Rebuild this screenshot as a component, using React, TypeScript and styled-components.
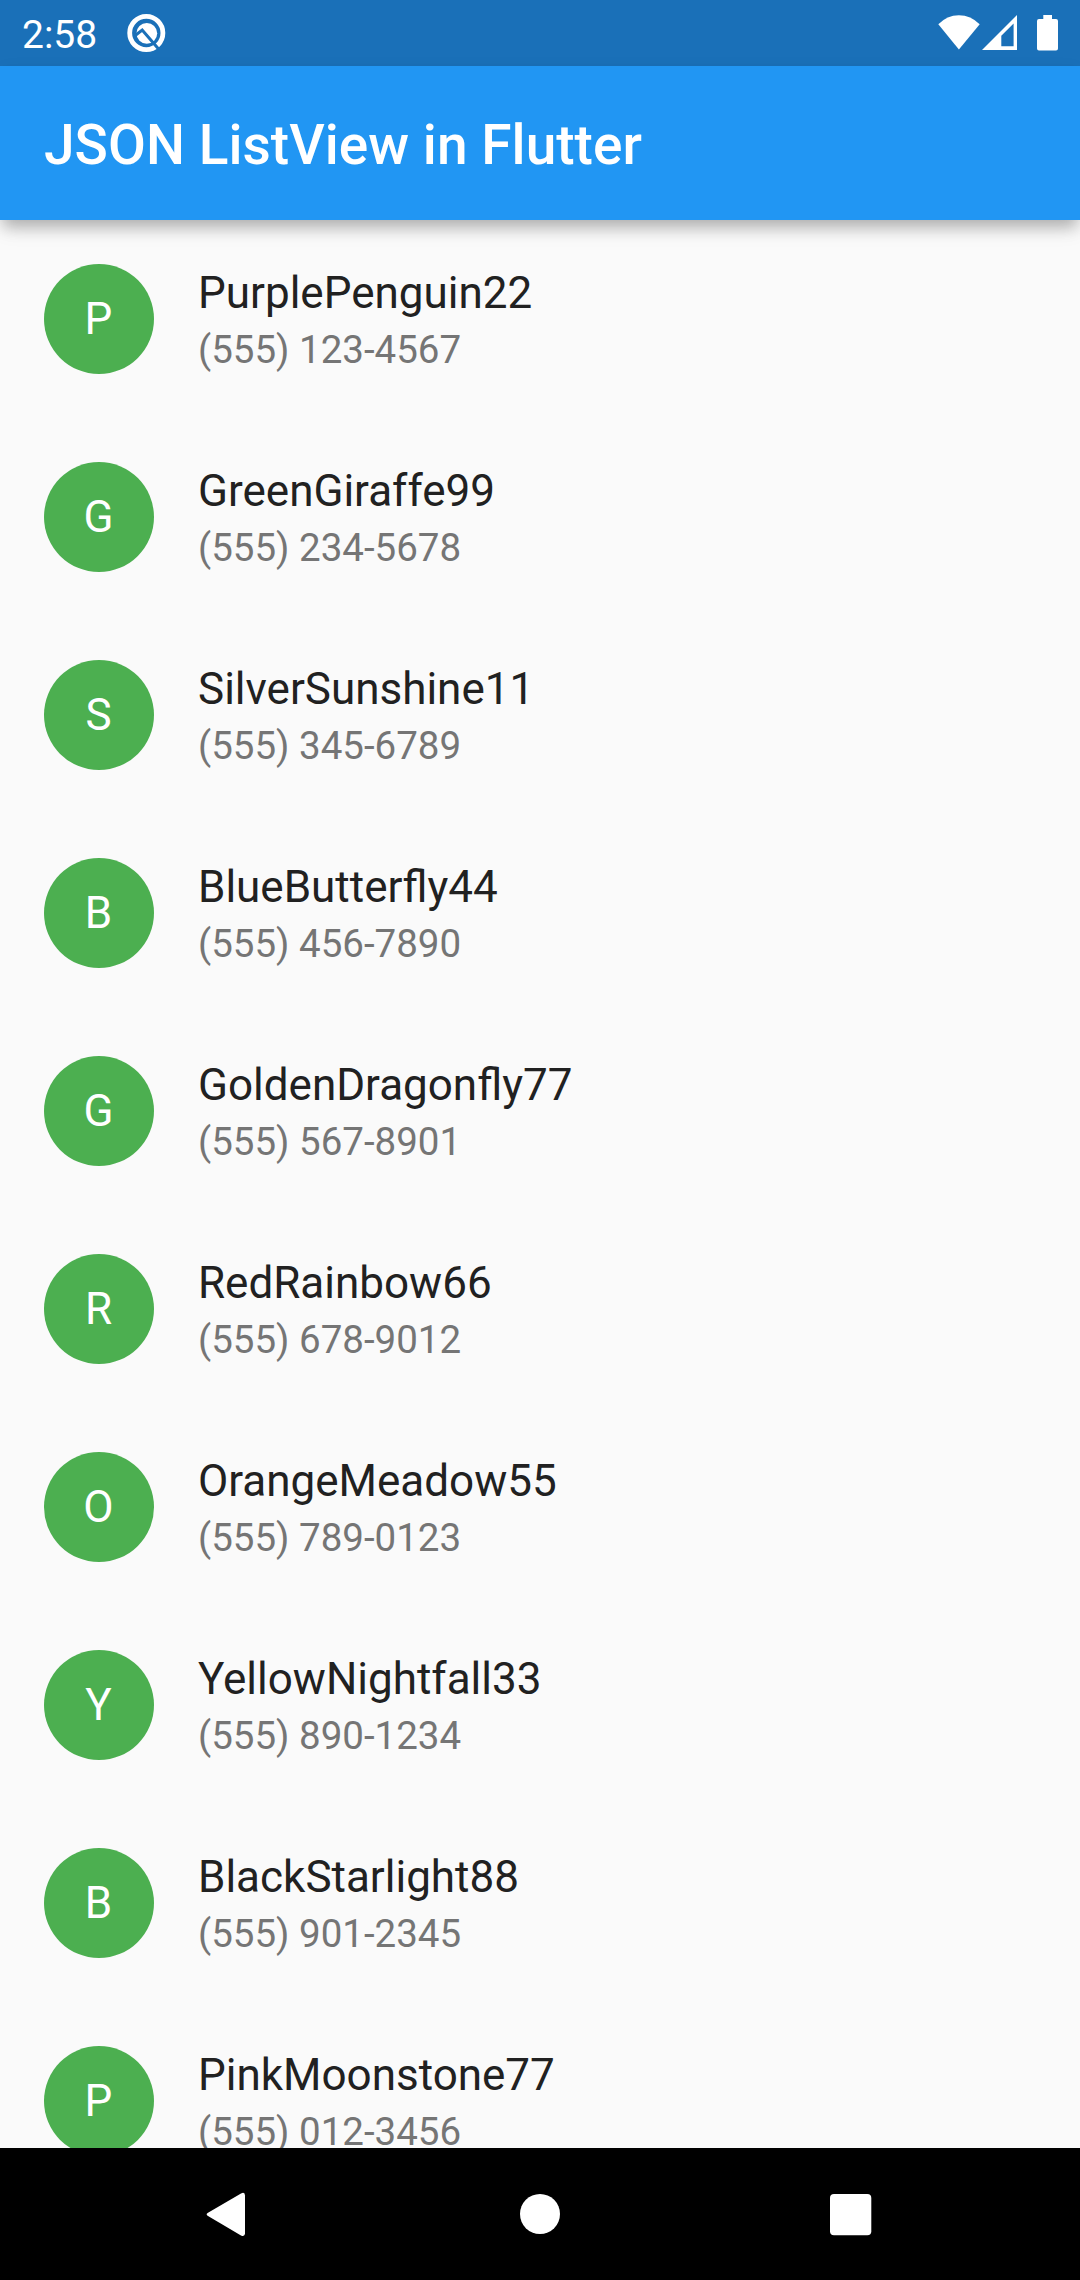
import React from "react";
import styled, { createGlobalStyle } from "styled-components";

const GlobalStyle = createGlobalStyle`
  html, body { margin: 0; padding: 0; }
  body {
    background: #fafafa;
    font-family: Roboto, "Liberation Sans", sans-serif;
    overflow: hidden;
  }
`;

const Screen = styled.div`
  width: 1080px;
  height: 2280px;
  display: flex;
  flex-direction: column;
  overflow: hidden;
  background: #fafafa;
`;

const StatusBar = styled.header`
  flex: none;
  height: 66px;
  box-sizing: border-box;
  display: flex;
  align-items: flex-start;
  justify-content: space-between;
  padding: 0 22px;
  background: #1a70b8;
  color: #fff;
`;

const StatusGroup = styled.div`
  display: flex;
  align-items: flex-start;
`;

const Clock = styled.span`
  width: 104px;
  padding-top: 12px;
  font-size: 39px;
  line-height: 46px;
`;

const StatusIcon = styled.svg<{ $gap?: number }>`
  display: block;
  height: 66px;
  margin-left: ${(p) => p.$gap ?? 0}px;
`;

const AppBar = styled.div`
  flex: none;
  height: 154px;
  box-sizing: border-box;
  display: flex;
  align-items: center;
  padding: 4px 44px 0;
  background: #2196f3;
  z-index: 1;
  box-shadow: 0 10px 14px -3px rgba(0, 0, 0, 0.21), 0 9px 20px -2px rgba(0, 0, 0, 0.13);
`;

const Title = styled.h1`
  margin: 0;
  color: #fff;
  font-size: 55px;
  font-weight: 500;
  line-height: 64px;
  letter-spacing: 0.04px;
`;

const List = styled.ul`
  flex: 1;
  min-height: 0;
  margin: 0;
  padding: 0;
  list-style: none;
  overflow: hidden;
`;

const Row = styled.li`
  height: 198px;
  box-sizing: border-box;
  display: flex;
  align-items: center;
  gap: 44px;
  padding: 0 44px;
`;

const Avatar = styled.div`
  flex: none;
  width: 110px;
  height: 110px;
  box-sizing: border-box;
  padding-right: 1px;
  display: flex;
  align-items: center;
  justify-content: center;
  border-radius: 50%;
  background: #4caf50;
  color: #fff;
  font-size: 44px;
  line-height: 52px;
`;

const Details = styled.div`
  display: flex;
  flex-direction: column;
  gap: 8px;
`;

const Name = styled.span`
  color: #212121;
  font-size: 44px;
  line-height: 52px;
`;

const Phone = styled.span`
  color: #757575;
  font-size: 38.5px;
  line-height: 45px;
`;

const NavBar = styled.nav`
  flex: none;
  height: 132px;
  box-sizing: border-box;
  padding-top: 2px;
  display: flex;
  align-items: center;
  justify-content: center;
  gap: 210px;
  background: #000;
`;

const NavIcon = styled.svg`
  display: block;
  width: 100px;
  height: 90px;
`;

const contacts = [
  { name: "PurplePenguin22", phone: "(555) 123-4567" },
  { name: "GreenGiraffe99", phone: "(555) 234-5678" },
  { name: "SilverSunshine11", phone: "(555) 345-6789" },
  { name: "BlueButterfly44", phone: "(555) 456-7890" },
  { name: "GoldenDragonfly77", phone: "(555) 567-8901" },
  { name: "RedRainbow66", phone: "(555) 678-9012" },
  { name: "OrangeMeadow55", phone: "(555) 789-0123" },
  { name: "YellowNightfall33", phone: "(555) 890-1234" },
  { name: "BlackStarlight88", phone: "(555) 901-2345" },
  { name: "PinkMoonstone77", phone: "(555) 012-3456" },
];

function SystemIcon() {
  return (
    <StatusIcon width="40" viewBox="126 0 40 66">
      <circle cx="146.3" cy="33" r="16.6" fill="none" stroke="#fff" strokeWidth="4.8" />
      <circle cx="146.8" cy="33.3" r="10.4" fill="#fff" />
      <path d="M134.5 36 L142.2 30 L158.8 49.2" fill="none" stroke="#1a70b8" strokeWidth="3" />
    </StatusIcon>
  );
}

function WifiIcon() {
  return (
    <StatusIcon width="42" viewBox="937.5 0 42 66">
      <path d="M958.4 49.5 L937.8 24.3 Q946.5 15.2 958.4 15.2 Q970.3 15.2 979.2 24.3 Z" fill="#fff" />
    </StatusIcon>
  );
}

function SignalIcon() {
  return (
    <StatusIcon width="36" viewBox="982 0 36 66" $gap={2.5}>
      <path
        fillRule="evenodd"
        d="M1017 15 V50 H982 Z M1013.6 23.5 L1001.3 35.8 V46.3 H1013.6 Z"
        fill="#fff"
      />
    </StatusIcon>
  );
}

function BatteryIcon() {
  return (
    <StatusIcon width="21" viewBox="1037 0 21 66" $gap={19}>
      <path
        d="M1043.3 15 H1052 V19 H1056 Q1058 19 1058 21 V48.5 Q1058 50.5 1056 50.5 H1039 Q1037 50.5 1037 48.5 V21 Q1037 19 1039 19 H1043.3 Z"
        fill="#fff"
      />
    </StatusIcon>
  );
}

export default function App() {
  return (
    <>
      <GlobalStyle />
      <Screen>
        <StatusBar>
          <StatusGroup>
            <Clock>2:58</Clock>
            <SystemIcon />
          </StatusGroup>
          <StatusGroup>
            <WifiIcon />
            <SignalIcon />
            <BatteryIcon />
          </StatusGroup>
        </StatusBar>
        <AppBar>
          <Title>JSON ListView in Flutter</Title>
        </AppBar>
        <List>
          {contacts.map((c) => (
            <Row key={c.name}>
              <Avatar>{c.name[0]}</Avatar>
              <Details>
                <Name>{c.name}</Name>
                <Phone>{c.phone}</Phone>
              </Details>
            </Row>
          ))}
        </List>
        <NavBar>
          <NavIcon viewBox="0 0 100 90">
            <path
              d="M28 42.8 L61 23.4 Q65 21.5 65 25.5 V63.2 Q65 67.2 61 65.4 L28 46 Q25.3 44.4 28 42.8 Z"
              fill="#fff"
            />
          </NavIcon>
          <NavIcon viewBox="0 0 100 90">
            <circle cx="50" cy="44" r="20" fill="#fff" />
          </NavIcon>
          <NavIcon viewBox="0 0 100 90">
            <rect x="30" y="24" width="41.3" height="41.3" rx="4" fill="#fff" />
          </NavIcon>
        </NavBar>
      </Screen>
    </>
  );
}
